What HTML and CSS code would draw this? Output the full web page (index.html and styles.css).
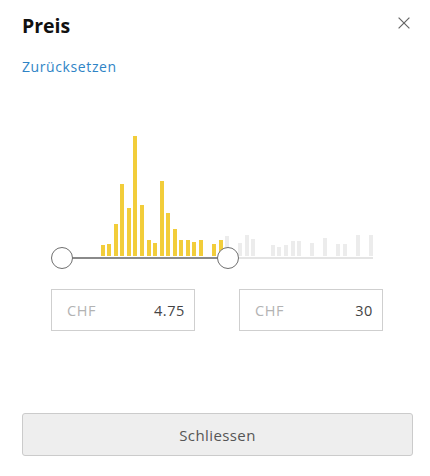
FILE: index.html
```html
<!DOCTYPE html>
<html lang="de">
<head>
<meta charset="utf-8">
<link rel="stylesheet" href="styles.css">
</head>
<body>
<div class="panel">
  <div class="header">
    <h1 class="title">Preis</h1>
    <button class="close" aria-label="Schliessen">
      <svg width="12" height="12" viewBox="0 0 12 12"><path d="M0.6 0.6 L11.4 11.4 M11.4 0.6 L0.6 11.4" stroke="#666" stroke-width="1.2" fill="none"/></svg>
    </button>
  </div>
  <a class="reset" href="#">Zurücksetzen</a>

  <div class="slider">
    <div class="hist">
      <span class="bar in" style="height:11px"></span>
      <span class="bar in" style="height:12px"></span>
      <span class="bar in" style="height:32px"></span>
      <span class="bar in" style="height:72px"></span>
      <span class="bar in" style="height:48px"></span>
      <span class="bar in" style="height:120px"></span>
      <span class="bar in" style="height:51px"></span>
      <span class="bar in" style="height:16px"></span>
      <span class="bar in" style="height:13px"></span>
      <span class="bar in" style="height:75px"></span>
      <span class="bar in" style="height:43px"></span>
      <span class="bar in" style="height:27px"></span>
      <span class="bar in" style="height:16px"></span>
      <span class="bar in" style="height:16px"></span>
      <span class="bar in" style="height:14px"></span>
      <span class="bar in" style="height:16px"></span>
      <span class="bar in" style="height:0px"></span>
      <span class="bar in" style="height:12px"></span>
      <span class="bar in" style="height:16px"></span>
      <span class="bar out" style="height:20px"></span>
      <span class="bar out" style="height:0px"></span>
      <span class="bar out" style="height:13px"></span>
      <span class="bar out" style="height:21px"></span>
      <span class="bar out" style="height:17px"></span>
      <span class="bar out" style="height:0px"></span>
      <span class="bar out" style="height:0px"></span>
      <span class="bar out" style="height:11px"></span>
      <span class="bar out" style="height:9px"></span>
      <span class="bar out" style="height:11px"></span>
      <span class="bar out" style="height:15px"></span>
      <span class="bar out" style="height:15px"></span>
      <span class="bar out" style="height:0px"></span>
      <span class="bar out" style="height:13px"></span>
      <span class="bar out" style="height:0px"></span>
      <span class="bar out" style="height:18px"></span>
      <span class="bar out" style="height:0px"></span>
      <span class="bar out" style="height:12px"></span>
      <span class="bar out" style="height:12px"></span>
      <span class="bar out" style="height:0px"></span>
      <span class="bar out" style="height:21px"></span>
      <span class="bar out" style="height:0px"></span>
      <span class="bar out" style="height:21px"></span>
    </div>
    <div class="track">
      <div class="range"></div>
      <span class="handle handle-min"></span>
      <span class="handle handle-max"></span>
    </div>
  </div>

  <div class="inputs">
    <label class="field"><span class="cur">CHF</span><span class="val">4.75</span></label>
    <label class="field"><span class="cur">CHF</span><span class="val">30</span></label>
  </div>

  <button class="btn">Schliessen</button>
</div>
</body>
</html>
```

FILE: styles.css
```css
* { box-sizing: border-box; }

body {
  margin: 0;
  background: #fff;
  font-family: "Open Sans", "Liberation Sans", sans-serif;
  color: #222;
}

.panel {
  padding: 14px 17px 0 22px;
  display: flex;
  flex-direction: column;
}

.header {
  display: flex;
  justify-content: space-between;
  align-items: flex-start;
}

.title {
  margin: 0;
  font-size: 19.5px;
  line-height: 24px;
  font-weight: 700;
  color: #111;
}

.close {
  margin: 3px 3px 0 0;
  padding: 0;
  border: 0;
  background: none;
  width: 12px;
  height: 12px;
  display: block;
}
.close svg { display: block; }

.reset {
  margin-top: 20px;
  align-self: flex-start;
  font-size: 14px;
  line-height: 18px;
  color: #2f84c6;
  text-decoration: none;
  letter-spacing: 0.6px;
}

.slider {
  margin: 55px 0 0 28px;
  padding: 0 11px;
  width: 334px;
}

.hist {
  display: flex;
  align-items: flex-end;
  gap: 2.556px;
  height: 125px;
  padding-left: 39.7px;
}

.bar {
  flex: 0 0 4px;
  width: 4px;
}
.bar.in { background: #f2cd3a; }
.bar.out { background: #ececec; }

.track {
  position: relative;
  margin-top: 1px;
  height: 2px;
  background: #e4e4e4;
}

.range {
  position: absolute;
  left: 0;
  top: 0;
  width: 167px;
  height: 2px;
  background: #8a8a8a;
}

.handle {
  position: absolute;
  top: -10px;
  width: 22px;
  height: 22px;
  border-radius: 50%;
  border: 1.6px solid #6f6f6f;
  background: #fff;
}
.handle-min { left: -10.5px; }
.handle-max { left: 156px; }

.inputs {
  display: flex;
  gap: 44px;
  margin: 30px 0 0 29px;
}

.field {
  width: 144px;
  height: 42px;
  border: 1px solid #cfcfcf;
  display: flex;
  align-items: center;
  justify-content: space-between;
  padding: 0 9px 0 15px;
  font-size: 14.5px;
  letter-spacing: 0.6px;
}
.cur { color: #b3b3b3; }
.val { color: #444; }

.btn {
  margin-top: 82px;
  height: 43px;
  width: 391px;
  border: 1px solid #cbcbcb;
  border-radius: 3px;
  background: #eeeeee;
  font-family: "Open Sans", "Liberation Sans", sans-serif;
  font-size: 15px;
  letter-spacing: 0.4px;
  color: #555;
  padding: 0;
}
```
